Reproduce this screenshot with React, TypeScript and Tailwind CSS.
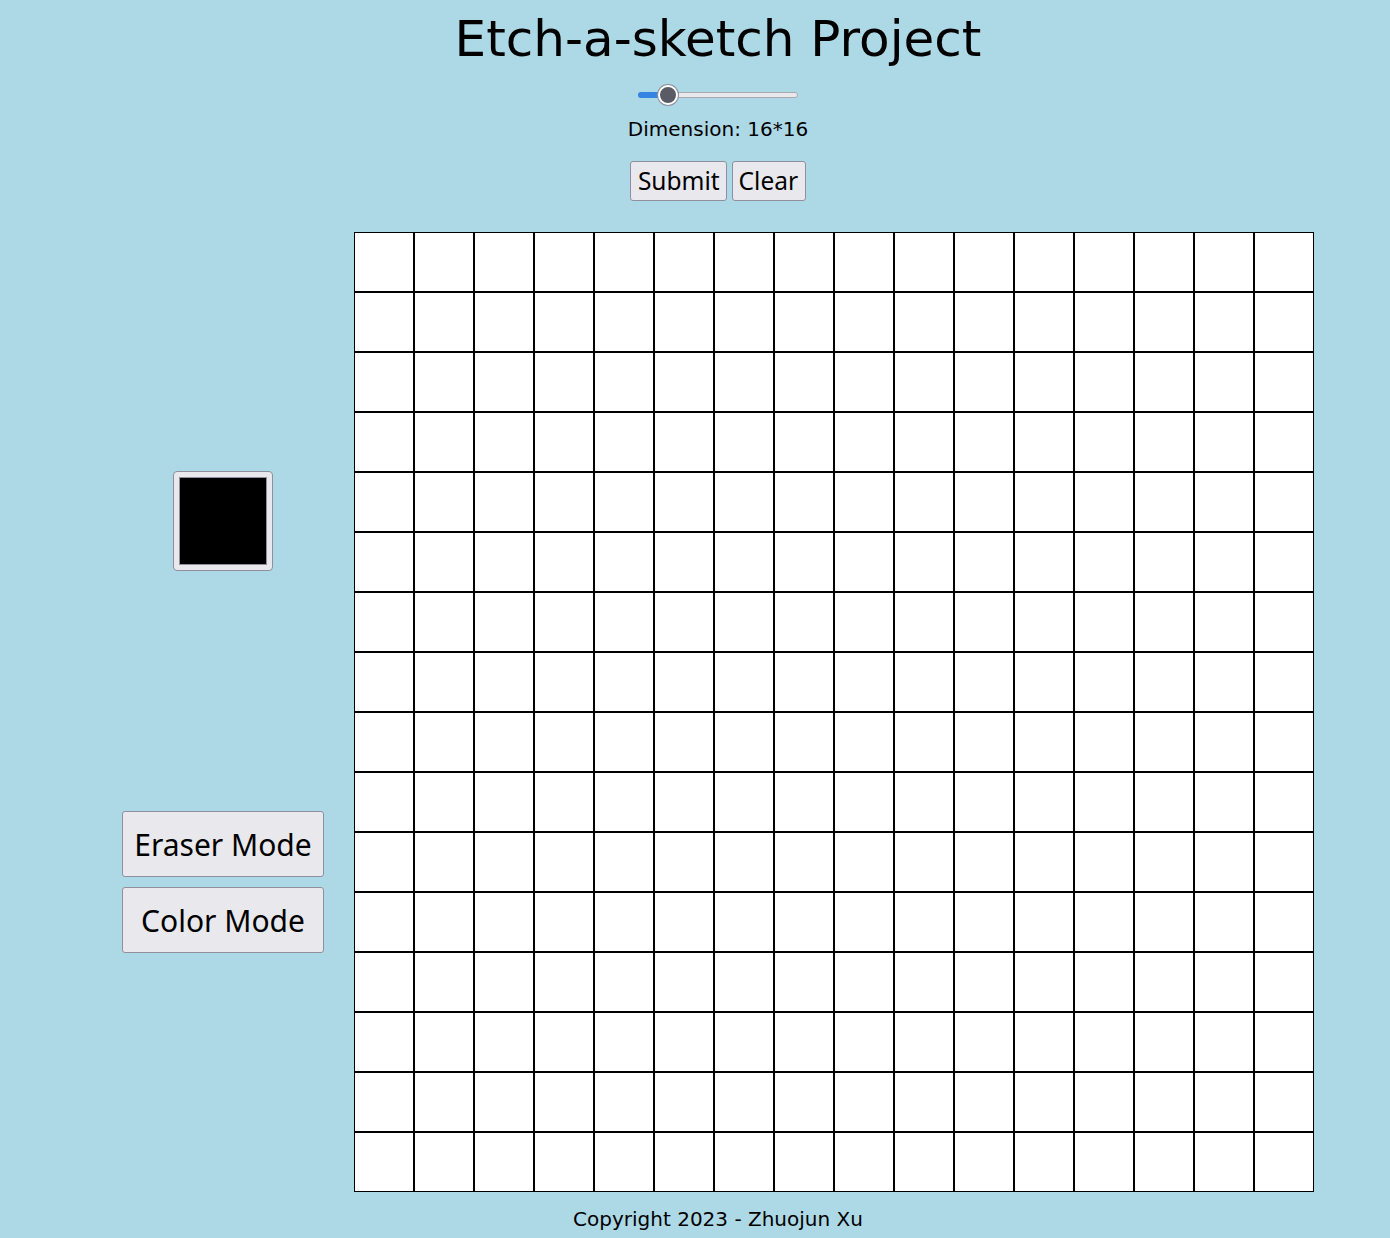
import { useState } from "react";

const SIZE = 16;

function Slider({ value, min, max }: { value: number; min: number; max: number }) {
  const pct = (value - min) / (max - min);
  // thumb travels inside the track minus its own width
  const left = 8 + pct * 144;
  return (
    <div className="relative w-[160px] h-[20px] flex items-center">
      <div className="w-full h-[6px] rounded-full bg-[#e9e9ed] border border-[#a9a9b3]" />
      <div
        className="absolute left-0 h-[6px] rounded-full bg-[#3584e4]"
        style={{ width: left }}
      />
      <div
        className="absolute top-0 w-[20px] h-[20px] rounded-full bg-[#5b5b66] border-2 border-white shadow-[0_0_0_1px_#8f8f9d]"
        style={{ left: left - 10 }}
      />
    </div>
  );
}

export default function App() {
  const [dim] = useState(16);
  const cells = Array.from({ length: SIZE * SIZE });

  return (
    <div className="min-h-screen bg-[#add8e6] text-black font-['DejaVu_Sans',sans-serif]">
      {/* Header */}
      <div className="pl-[46px] flex flex-col items-center">
        <h1 className="text-[50px] leading-[56px] mt-[11px]">Etch-a-sketch Project</h1>
        <div className="mt-[18px]">
          <Slider value={dim} min={1} max={100} />
        </div>
        <p className="text-[20px] leading-[24px] mt-[12px]">
          Dimension: {dim}*{dim}
        </p>
        <div className="flex gap-[5px] mt-[20px] font-['Noto_Sans',sans-serif]">
          <button className="h-[40px] pl-[7px] pr-[6px] pt-[1px] text-[24.5px] bg-[#e9e9ed] border border-[#8f8f9d] rounded-[3px]">
            Submit
          </button>
          <button className="h-[40px] pl-[6px] pr-[7px] pt-[1px] text-[24.5px] bg-[#e9e9ed] border border-[#8f8f9d] rounded-[3px]">
            Clear
          </button>
        </div>
      </div>

      {/* Main */}
      <div className="flex pl-[122px] gap-[30px] mt-[31px]">
        <div className="w-[202px] flex flex-col items-center justify-evenly">
          <div className="w-[100px] h-[100px] bg-[#e9e9ed] border border-[#8f8f9d] rounded-[4px] p-[5px]">
            <div className="w-full h-full bg-black border border-[#8f8f9d]" />
          </div>
          <div className="flex flex-col gap-[10px] font-['Noto_Sans',sans-serif]">
            <button className="w-[202px] h-[66px] pt-[2px] text-[30px] bg-[#e9e9ed] border border-[#8f8f9d] rounded-[3px]">
              Eraser Mode
            </button>
            <button className="w-[202px] h-[66px] pt-[2px] text-[30px] bg-[#e9e9ed] border border-[#8f8f9d] rounded-[3px]">
              Color Mode
            </button>
          </div>
        </div>
        <div className="grid grid-cols-[repeat(16,60px)] w-[960px] h-[960px]">
          {cells.map((_, i) => (
            <div key={i} className="w-[60px] h-[60px] bg-white border border-black" />
          ))}
        </div>
      </div>

      {/* Footer */}
      <p className="pl-[46px] text-center text-[20px] leading-[24px] mt-[15px]">
        Copyright 2023 - Zhuojun Xu
      </p>
    </div>
  );
}
